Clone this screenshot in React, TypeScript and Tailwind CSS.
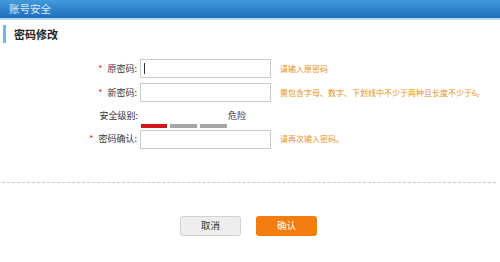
import React from 'react'

const font = { fontFamily: '"Noto Sans CJK SC", "Noto Sans", sans-serif' }

function Row({ label, required, hint, cursor }: { label: string; required?: boolean; hint: string; cursor?: boolean }) {
  return (
    <div className="flex h-[19px] items-center whitespace-nowrap">
      <div className="flex w-[140px] items-center justify-end pr-[3px] text-[9px] text-[#333]">
        {required && <span className="mr-[5px] text-[#e0302e]">*</span>}
        <span>{label}</span>
      </div>
      <div className="relative h-[19px] w-[131px] shrink-0 border border-[#c9c9c9] bg-white">
        {cursor && <span className="absolute left-[3px] top-[3px] h-[11px] w-px bg-[#333]" />}
      </div>
      <span className="ml-[9px] text-[8px] text-[#e6922a]">{hint}</span>
    </div>
  )
}

export default function App() {
  return (
    <div className="h-[262px] w-[500px] overflow-hidden bg-white" style={font}>
      <div className="h-[18px] bg-gradient-to-b from-[#4399da] to-[#1d6fbe] pl-[9px] text-[10.5px] leading-[18px] text-[#dbe9f6]">
        账号安全
      </div>
      <div className="h-[2px] bg-[#b4dcf4]" />

      <div className="mt-[5px] flex items-center">
        <div className="ml-[3px] h-[18px] w-[3px] bg-[#78b6df]" />
        <span className="ml-[8px] text-[11px] font-bold text-[#222]">密码修改</span>
      </div>

      <div className="mt-[16px] flex flex-col">
        <Row label="原密码:" required hint="请输入原密码" cursor />
        <div className="h-[5px]" />
        <Row label="新密码:" required hint="需包含字母、数字、下划线中不少于两种且长度不少于6。" />
        <div className="mt-[7px] flex items-center">
          <div className="w-[140px] pr-[2px] text-right text-[9px] text-[#333]">安全级别:</div>
          <span className="ml-[88px] text-[9px] text-[#333]">危险</span>
        </div>
        <div className="ml-[141px] mt-[1px] flex gap-[3px]">
          <div className="h-[4px] w-[26px] bg-[#d0161c]" />
          <div className="h-[4px] w-[27px] bg-[#a5a5a5]" />
          <div className="h-[4px] w-[27px] bg-[#a5a5a5]" />
        </div>
        <div className="h-[2px]" />
        <Row label="密码确认:" required hint="请再次输入密码。" />
      </div>

      <div className="mx-[2px] mt-[33px] w-[494px] border-t border-dashed border-[#c8c8c8]" />

      <div className="mt-[33px] flex gap-[15px] pl-[180px]">
        <button className="h-[20px] w-[61px] rounded-[3px] border border-[#d3d3d3] bg-[#eeeeee] text-[9.5px] text-[#333]">取消</button>
        <button className="h-[20px] w-[61px] rounded-[3px] bg-[#f57d0f] text-[9.5px] text-white">确认</button>
      </div>
    </div>
  )
}
